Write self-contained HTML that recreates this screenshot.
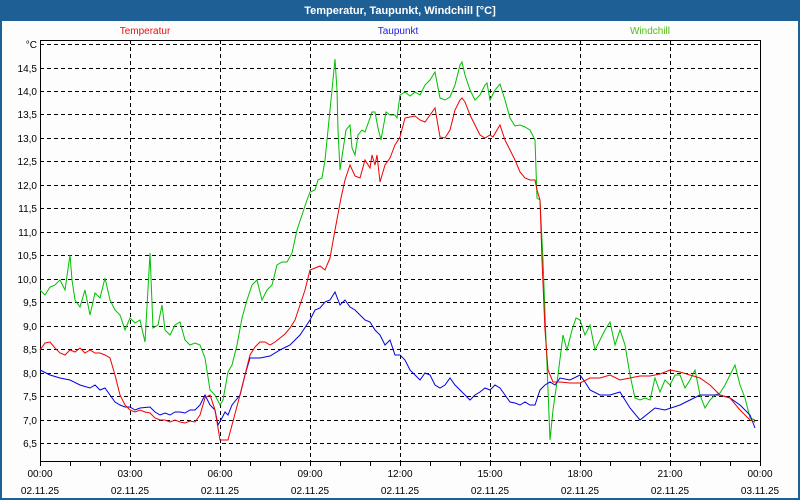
<!DOCTYPE html>
<html><head><meta charset="utf-8"><style>
html,body{margin:0;padding:0;}
body{width:800px;height:500px;overflow:hidden;background:#1e5f95;font-family:"Liberation Sans","DejaVu Sans",sans-serif;}
</style></head><body>
<svg width="800" height="500" xmlns="http://www.w3.org/2000/svg" style="display:block;font-family:'Liberation Sans','DejaVu Sans',sans-serif">
<rect x="0" y="0" width="800" height="500" fill="#1e5f95"/>
<rect x="2" y="21" width="796" height="477" fill="#fcfdfc"/>
<text x="400" y="14" text-anchor="middle" fill="#fff" font-size="11" font-weight="bold">Temperatur, Taupunkt, Windchill [°C]</text>
<text x="145" y="34" text-anchor="middle" fill="#e81010" font-size="10">Temperatur</text>
<text x="398" y="34" text-anchor="middle" fill="#2020e0" font-size="10">Taupunkt</text>
<text x="650" y="34" text-anchor="middle" fill="#50c010" font-size="10">Windchill</text>
<g stroke="#000" stroke-width="1" stroke-dasharray="4,3" fill="none">
<path d="M40 44.5H760M40 68.5H760M40 91.5H760M40 114.5H760M40 138.5H760M40 161.5H760M40 185.5H760M40 208.5H760M40 232.5H760M40 255.5H760M40 279.5H760M40 302.5H760M40 326.5H760M40 349.5H760M40 373.5H760M40 396.5H760M40 420.5H760M40 443.5H760"/>
<path d="M130.5 40V461M220.5 40V461M310.5 40V461M400.5 40V461M490.5 40V461M580.5 40V461M670.5 40V461"/>
</g>
<path d="M40.5 40.5H760.5V461.5H40.5Z" stroke="#000" fill="none"/>
<path d="M40.5 461V466M70.5 461V466M100.5 461V466M130.5 461V466M160.5 461V466M190.5 461V466M220.5 461V466M250.5 461V466M280.5 461V466M310.5 461V466M340.5 461V466M370.5 461V466M400.5 461V466M430.5 461V466M460.5 461V466M490.5 461V466M520.5 461V466M550.5 461V466M580.5 461V466M610.5 461V466M640.5 461V466M670.5 461V466M700.5 461V466M730.5 461V466M760.5 461V466" stroke="#000"/>
<g font-size="10" fill="#000" text-anchor="end">
<text x="37" y="48">°C</text><text x="37" y="72">14,5</text><text x="37" y="95">14,0</text><text x="37" y="118">13,5</text><text x="37" y="142">13,0</text><text x="37" y="165">12,5</text><text x="37" y="189">12,0</text><text x="37" y="212">11,5</text><text x="37" y="236">11,0</text><text x="37" y="259">10,5</text><text x="37" y="283">10,0</text><text x="37" y="306">9,5</text><text x="37" y="330">9,0</text><text x="37" y="353">8,5</text><text x="37" y="377">8,0</text><text x="37" y="400">7,5</text><text x="37" y="424">7,0</text><text x="37" y="447">6,5</text>
</g>
<g font-size="10" fill="#000" text-anchor="middle">
<text x="40" y="477">00:00</text><text x="40" y="494">02.11.25</text>
<text x="130" y="477">03:00</text><text x="130" y="494">02.11.25</text>
<text x="220" y="477">06:00</text><text x="220" y="494">02.11.25</text>
<text x="310" y="477">09:00</text><text x="310" y="494">02.11.25</text>
<text x="400" y="477">12:00</text><text x="400" y="494">02.11.25</text>
<text x="490" y="477">15:00</text><text x="490" y="494">02.11.25</text>
<text x="580" y="477">18:00</text><text x="580" y="494">02.11.25</text>
<text x="670" y="477">21:00</text><text x="670" y="494">02.11.25</text>
<text x="760" y="477">00:00</text><text x="760" y="494">03.11.25</text>
</g>
<g fill="none" stroke-width="1">
<polyline stroke="#00c000" points="40,290 45,295 50,287 55,285 60,280 65,290 70,255 72,280 75,300 80,307 85,290 90,315 95,293 100,298 105,278 110,300 115,310 120,315 125,330 130,318 135,323 140,320 145,342 150,253 153,328 158,325 162,305 165,330 170,335 175,325 180,322 185,340 190,345 195,343 200,345 205,358 210,390 215,395 220,405 223,400 228,372 232,365 237,345 242,318 247,300 252,285 257,280 262,300 267,290 272,285 277,265 282,262 287,262 292,253 297,230 302,215 307,200 310,192 315,190 318,180 322,178 325,160 328,130 332,90 335,59 337,90 338,130 340,170 343,150 346,130 350,125 352,148 355,155 358,135 362,130 365,132 370,118 372,112 375,112 378,128 381,140 386,112 390,115 395,115 397,118 400,95 405,92 410,96 415,92 420,95 425,85 430,80 435,72 440,98 445,100 450,97 455,85 460,65 462,62 465,75 470,90 475,100 480,95 485,85 487,83 490,100 495,90 500,84 505,100 510,118 515,126 520,125 525,127 530,130 535,140 537,198 540,200 543,260 546,340 550,440 553,410 558,375 563,335 567,350 572,330 576,318 580,320 585,335 590,325 595,350 600,340 605,330 610,322 615,345 620,330 625,345 630,375 635,398 640,400 645,398 650,400 655,378 660,392 665,380 670,385 675,375 680,375 685,388 690,380 695,370 700,395 705,408 710,400 715,395 720,393 725,385 730,375 735,365 740,385 745,398 750,418 755,420"/>
<polyline stroke="#0000e0" points="40,370 50,375 60,378 70,380 80,385 90,388 95,385 100,390 105,388 110,395 115,402 120,405 125,407 130,407 135,410 140,408 150,407 155,412 160,415 165,413 170,415 175,412 180,412 185,413 190,410 195,410 200,405 205,395 210,405 215,410 218,425 222,418 225,412 228,415 232,405 240,395 245,375 250,358 260,358 270,356 280,350 290,345 300,335 310,320 315,310 320,308 325,302 330,300 335,292 340,305 345,300 350,307 355,310 360,315 365,320 370,322 375,330 380,335 385,345 390,340 395,355 400,355 405,360 410,370 415,375 420,380 425,373 430,375 435,385 440,388 445,385 450,378 455,385 460,390 465,395 470,400 475,395 480,392 485,388 490,390 495,385 500,388 505,395 510,402 515,403 520,405 525,402 530,405 535,405 540,390 545,385 550,382 555,385 560,378 570,380 580,375 585,382 590,390 600,395 610,395 620,392 630,408 640,420 650,412 655,408 665,410 680,405 690,400 700,395 710,395 720,395 730,398 740,405 750,415 755,428"/>
<polyline stroke="#f00000" points="40,350 45,343 50,342 55,348 60,353 65,355 70,350 75,352 80,348 85,353 90,350 95,353 100,353 105,355 110,358 115,375 120,395 125,405 130,410 135,412 140,410 145,412 150,413 155,418 160,420 165,420 170,422 175,420 180,422 185,423 190,421 195,422 200,415 205,398 210,395 215,410 220,440 225,440 228,440 232,425 240,395 245,375 250,355 255,347 260,342 265,342 270,345 275,342 280,338 285,334 290,328 295,320 300,305 305,290 310,270 315,268 320,266 325,270 330,258 335,230 341,198 345,180 350,165 355,176 360,178 365,160 370,168 372,155 375,165 377,155 380,182 385,165 390,158 395,145 400,137 405,118 410,117 415,116 420,120 425,122 430,115 435,108 440,137 445,138 450,130 455,110 460,100 462,98 465,102 470,115 475,125 480,135 485,138 490,135 493,137 497,130 500,125 505,140 510,150 515,160 520,172 525,178 530,180 535,180 537,190 540,200 542,260 545,330 548,370 553,382 560,382 570,383 580,383 590,378 600,378 610,375 620,380 630,378 640,376 650,376 660,374 670,370 680,372 690,375 700,378 710,385 720,395 730,398 740,410 750,420 755,422"/>
</g>
</svg>
</body></html>
